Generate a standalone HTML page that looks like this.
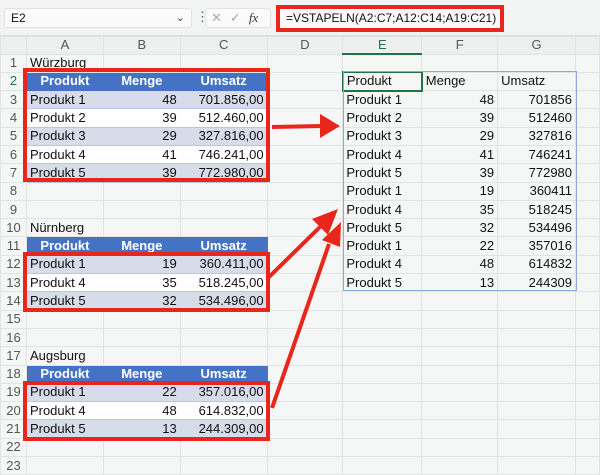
<!DOCTYPE html>
<html><head><meta charset="utf-8"><style>
*{margin:0;padding:0;box-sizing:border-box}
body{width:600px;height:465px;overflow:hidden;background:#f5f6f6;font-family:"Liberation Sans",sans-serif;position:relative;color:#111}
#top{position:absolute;left:0;top:0;width:600px;height:36px;background:#f2f3f3;border-bottom:1px solid #ddd}
#name{position:absolute;left:4px;top:8px;width:188px;height:20px;background:#fafafa;border:1px solid #e2e2e2;border-radius:3px;font-size:12px;line-height:18px;padding-left:6px}
#name span{position:absolute;right:6px;top:0;font-size:11px;color:#444}
#fx{position:absolute;left:205px;top:8px;width:66px;height:20px;background:#fafafa;border:1px solid #e2e2e2;border-radius:3px;font-size:13px;color:#aaa;line-height:18px}
#formula{position:absolute;left:276px;top:5px;width:228px;height:27px;border:4px solid #e8261c;background:#fafafa;font-size:12px;line-height:19px;padding-left:6px;white-space:nowrap}
table{position:absolute;left:0;top:36px;border-collapse:collapse;table-layout:fixed;font-size:13px}
td{border:1px solid #e2e3e3;height:18.3px;padding:0 3px;white-space:nowrap;overflow:hidden;line-height:16px}
tr.h td{height:17px;background:#eef0f0;text-align:center;color:#555;font-size:13px}
td.n{text-align:center;color:#555;padding:0;background:#f5f6f6}
td.r{text-align:right}
td.bh{background:#4472c4;color:#fff;font-weight:bold;text-align:center;border-color:#4472c4}
td.l{background:#d6dcea;border-color:#b7c6e4 #d6dcea}
td.w{background:#fff;border-color:#b7c6e4 #fff}
.box{position:absolute;border:4px solid #e8261c}
</style></head><body>
<div id="top">
<div id="name">E2<span>&#8964;</span></div>
<div style="position:absolute;left:196px;top:9px;font-size:13px;color:#555">&#8942;</div>
<div id="fx"><span style="margin-left:5px">&#10005;</span><span style="margin-left:8px">&#10003;</span><span style="margin-left:8px;color:#333;font-family:'Liberation Serif',serif;font-style:italic">fx</span></div>
</div>
<div id="formula">=VSTAPELN(A2:C7;A12:C14;A19:C21)</div>
<table>
<colgroup><col style="width:26px"><col style="width:77px"><col style="width:77px"><col style="width:87px"><col style="width:76px"><col style="width:79px"><col style="width:76px"><col style="width:78px"><col style="width:24px"></colgroup>
<tr class="h"><td></td><td>A</td><td>B</td><td>C</td><td>D</td><td style="color:#217346;border-bottom:2px solid #217346">E</td><td>F</td><td>G</td><td></td></tr>
<tr><td class="n">1</td><td>Würzburg</td><td></td><td></td><td></td><td></td><td></td><td></td><td></td></tr>
<tr><td class="n" style="color:#217346">2</td><td class="bh">Produkt</td><td class="bh">Menge</td><td class="bh">Umsatz</td><td></td><td style="border:2px solid #217346">Produkt</td><td>Menge</td><td>Umsatz</td><td></td></tr>
<tr><td class="n">3</td><td class="l">Produkt 1</td><td class="l r">48</td><td class="l r">701.856,00</td><td></td><td>Produkt 1</td><td class="r">48</td><td class="r">701856</td><td></td></tr>
<tr><td class="n">4</td><td class="w">Produkt 2</td><td class="w r">39</td><td class="w r">512.460,00</td><td></td><td>Produkt 2</td><td class="r">39</td><td class="r">512460</td><td></td></tr>
<tr><td class="n">5</td><td class="l">Produkt 3</td><td class="l r">29</td><td class="l r">327.816,00</td><td></td><td>Produkt 3</td><td class="r">29</td><td class="r">327816</td><td></td></tr>
<tr><td class="n">6</td><td class="w">Produkt 4</td><td class="w r">41</td><td class="w r">746.241,00</td><td></td><td>Produkt 4</td><td class="r">41</td><td class="r">746241</td><td></td></tr>
<tr><td class="n">7</td><td class="l">Produkt 5</td><td class="l r">39</td><td class="l r">772.980,00</td><td></td><td>Produkt 5</td><td class="r">39</td><td class="r">772980</td><td></td></tr>
<tr><td class="n">8</td><td></td><td></td><td></td><td></td><td>Produkt 1</td><td class="r">19</td><td class="r">360411</td><td></td></tr>
<tr><td class="n">9</td><td></td><td></td><td></td><td></td><td>Produkt 4</td><td class="r">35</td><td class="r">518245</td><td></td></tr>
<tr><td class="n">10</td><td>Nürnberg</td><td></td><td></td><td></td><td>Produkt 5</td><td class="r">32</td><td class="r">534496</td><td></td></tr>
<tr><td class="n">11</td><td class="bh">Produkt</td><td class="bh">Menge</td><td class="bh">Umsatz</td><td></td><td>Produkt 1</td><td class="r">22</td><td class="r">357016</td><td></td></tr>
<tr><td class="n">12</td><td class="l">Produkt 1</td><td class="l r">19</td><td class="l r">360.411,00</td><td></td><td>Produkt 4</td><td class="r">48</td><td class="r">614832</td><td></td></tr>
<tr><td class="n">13</td><td class="w">Produkt 4</td><td class="w r">35</td><td class="w r">518.245,00</td><td></td><td>Produkt 5</td><td class="r">13</td><td class="r">244309</td><td></td></tr>
<tr><td class="n">14</td><td class="l">Produkt 5</td><td class="l r">32</td><td class="l r">534.496,00</td><td></td><td></td><td></td><td></td><td></td></tr>
<tr><td class="n">15</td><td></td><td></td><td></td><td></td><td></td><td></td><td></td><td></td></tr>
<tr><td class="n">16</td><td></td><td></td><td></td><td></td><td></td><td></td><td></td><td></td></tr>
<tr><td class="n">17</td><td>Augsburg</td><td></td><td></td><td></td><td></td><td></td><td></td><td></td></tr>
<tr><td class="n">18</td><td class="bh">Produkt</td><td class="bh">Menge</td><td class="bh">Umsatz</td><td></td><td></td><td></td><td></td><td></td></tr>
<tr><td class="n">19</td><td class="l">Produkt 1</td><td class="l r">22</td><td class="l r">357.016,00</td><td></td><td></td><td></td><td></td><td></td></tr>
<tr><td class="n">20</td><td class="w">Produkt 4</td><td class="w r">48</td><td class="w r">614.832,00</td><td></td><td></td><td></td><td></td><td></td></tr>
<tr><td class="n">21</td><td class="l">Produkt 5</td><td class="l r">13</td><td class="l r">244.309,00</td><td></td><td></td><td></td><td></td><td></td></tr>
<tr><td class="n">22</td><td></td><td></td><td></td><td></td><td></td><td></td><td></td><td></td></tr>
<tr><td class="n">23</td><td></td><td></td><td></td><td></td><td></td><td></td><td></td><td></td></tr>
</table>
<div style="position:absolute;left:343px;top:71px;width:234px;height:220px;border:1px solid #8eaadb;pointer-events:none"></div>
<div class="box" style="left:23px;top:68px;width:247px;height:114px"></div>
<div class="box" style="left:23px;top:252px;width:247px;height:60px"></div>
<div class="box" style="left:23px;top:381px;width:247px;height:60px"></div>
<svg width="600" height="465" style="position:absolute;left:0;top:0">
<g stroke="#e8261c" stroke-width="4" fill="#e8261c">
<line x1="272" y1="127" x2="322" y2="126"/>
<polygon points="340,126 320,114 320,138" stroke="none"/>
<line x1="268" y1="278" x2="325" y2="222"/>
<polygon points="338,209 312,219 328,235" stroke="none"/>
<line x1="272" y1="408" x2="329" y2="244"/>
<polygon points="341,222 322,240 340,247" stroke="none"/>
</g>
</svg>
</body></html>
